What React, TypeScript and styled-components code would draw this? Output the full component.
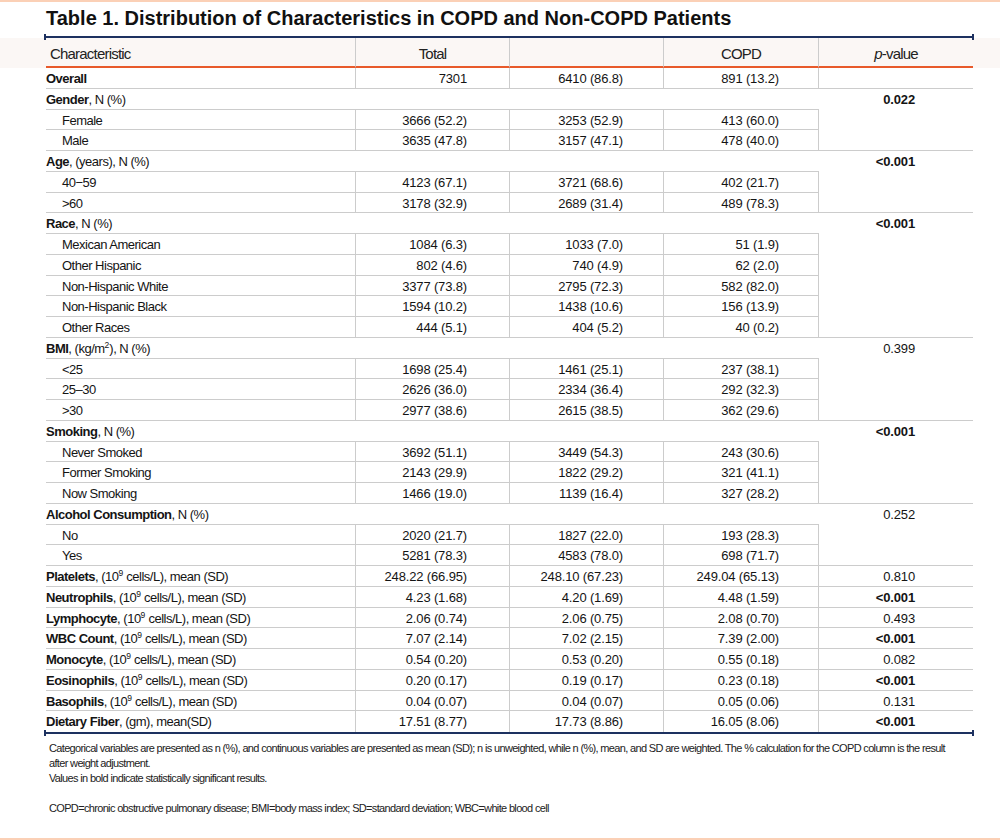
import React from "react";
import styled, { createGlobalStyle } from "styled-components";

const SANS = '"Liberation Sans", Arial, Helvetica, sans-serif';
const NAVY = "#1d3160";
const ORANGE = "#e85a2b";
const GRID = "#cccccc";
const INK = "#141414";

const Global = createGlobalStyle`
  html, body { margin: 0; padding: 0; background: #fff; }
  body { font-family: ${SANS}; color: ${INK}; }
  * { box-sizing: border-box; }
`;

const Page = styled.div`
  width: 1000px;
  height: 840px;
  border-top: 2px solid #fbd0b6;
  border-bottom: 2px solid #fbd0b6;
  display: flex;
  flex-direction: column;
`;

const Title = styled.h1`
  margin: 4px 0 0 0;
  padding-left: 46px;
  font-family: ${SANS};
  font-weight: 700;
  font-size: 20px;
  line-height: 24px;
  color: #111;
`;

const TableArea = styled.div`
  margin-top: 6px;
  background: linear-gradient(#fbf7f5, #fbf7f5) no-repeat 0 2px / 100% 30px;
`;

const Rule = styled.div`
  position: relative;
  margin-left: 44px;
  width: 930px;
  height: 2px;
  background: ${NAVY};
  &::before,
  &::after {
    content: "";
    position: absolute;
    top: -2px;
    width: 2px;
    height: 6px;
    background: ${NAVY};
  }
  &::before { left: 0; }
  &::after { right: 0; }
`;

const Grid = styled.div`
  margin-left: 46px;
  width: 927px;
  display: grid;
  grid-template-columns: 310px 154px 154px 155px 154px;
  grid-template-rows: 30px;
  grid-auto-rows: 20.75px;
`;

const HeadCell = styled.div<{ $align: "left" | "center"; $last?: boolean }>`
  display: flex;
  align-items: center;
  justify-content: ${(p) => (p.$align === "left" ? "flex-start" : "center")};
  padding-left: ${(p) => (p.$align === "left" ? "4px" : "0")};
  padding-top: 3px;
  font-size: 15px;
  letter-spacing: -0.8px;
  color: #222;
  border-bottom: 2px solid ${ORANGE};
  border-right: ${(p) => (p.$last ? "none" : `1px solid ${GRID}`)};
  i { font-style: italic; }
`;

const Cell = styled.div<{
  $kind: "label" | "value" | "p";
  $pad?: number;
  $indent?: boolean;
  $right?: boolean;
  $bottom?: boolean;
  $span?: number;
  $cols?: number;
  $bold?: boolean;
}>`
  display: flex;
  align-items: flex-start;
  justify-content: ${(p) => (p.$kind === "label" ? "flex-start" : "flex-end")};
  padding-left: ${(p) => (p.$kind === "label" ? (p.$indent ? "16px" : "0") : "0")};
  padding-right: ${(p) => (p.$pad ? `${p.$pad}px` : "0")};
  padding-top: 2px;
  grid-row: ${(p) => (p.$span ? `span ${p.$span}` : "auto")};
  grid-column: ${(p) => (p.$cols ? `span ${p.$cols}` : "auto")};
  font-size: 13px;
  letter-spacing: ${(p) => (p.$kind === "label" ? "-0.5px" : "-0.15px")};
  line-height: 17.75px;
  font-weight: ${(p) => (p.$bold ? 700 : 400)};
  white-space: nowrap;
  border-right: ${(p) => (p.$right ? `1px solid ${GRID}` : "none")};
  border-bottom: ${(p) => (p.$bottom ? `1px solid ${GRID}` : "none")};
  b { font-weight: 700; }
`;

const Sup = styled.sup`
  font-size: 8.5px;
  line-height: 0;
  vertical-align: 5px;
  letter-spacing: 0;
`;

const Notes = styled.div`
  margin-top: 7px;
  padding-left: 49px;
  font-size: 11px;
  letter-spacing: -0.66px;
  line-height: 15px;
  color: #222;
`;

const NoteLine = styled.div<{ $gap?: boolean }>`
  margin-top: ${(p) => (p.$gap ? "15px" : "0")};
  white-space: nowrap;
`;

const PAD = [42, 40, 39];
const P_PAD = 58;

type Group = {
  kind: "group";
  label: React.ReactNode;
  p: string;
  pBold: boolean;
  items: string[][];
};
type Cont = {
  kind: "cont";
  name: string;
  rest: React.ReactNode;
  values: string[];
  p: string;
  pBold: boolean;
};
type Overall = { kind: "overall"; values: string[] };
type Row = Group | Cont | Overall;

const unit = (
  <>
    , (10<Sup>9</Sup> cells/L), mean (SD)
  </>
);

const rows: Row[] = [
  { kind: "overall", values: ["7301", "6410 (86.8)", "891 (13.2)"] },
  {
    kind: "group",
    label: (
      <>
        <b>Gender</b>, N (%)
      </>
    ),
    p: "0.022",
    pBold: true,
    items: [
      ["Female", "3666 (52.2)", "3253 (52.9)", "413 (60.0)"],
      ["Male", "3635 (47.8)", "3157 (47.1)", "478 (40.0)"],
    ],
  },
  {
    kind: "group",
    label: (
      <>
        <b>Age</b>, (years), N (%)
      </>
    ),
    p: "<0.001",
    pBold: true,
    items: [
      ["40\u221259", "4123 (67.1)", "3721 (68.6)", "402 (21.7)"],
      [">60", "3178 (32.9)", "2689 (31.4)", "489 (78.3)"],
    ],
  },
  {
    kind: "group",
    label: (
      <>
        <b>Race</b>, N (%)
      </>
    ),
    p: "<0.001",
    pBold: true,
    items: [
      ["Mexican American", "1084 (6.3)", "1033 (7.0)", "51 (1.9)"],
      ["Other Hispanic", "802 (4.6)", "740 (4.9)", "62 (2.0)"],
      ["Non-Hispanic White", "3377 (73.8)", "2795 (72.3)", "582 (82.0)"],
      ["Non-Hispanic Black", "1594 (10.2)", "1438 (10.6)", "156 (13.9)"],
      ["Other Races", "444 (5.1)", "404 (5.2)", "40 (0.2)"],
    ],
  },
  {
    kind: "group",
    label: (
      <>
        <b>BMI</b>, (kg/m<Sup>2</Sup>), N (%)
      </>
    ),
    p: "0.399",
    pBold: false,
    items: [
      ["<25", "1698 (25.4)", "1461 (25.1)", "237 (38.1)"],
      ["25\u201330", "2626 (36.0)", "2334 (36.4)", "292 (32.3)"],
      [">30", "2977 (38.6)", "2615 (38.5)", "362 (29.6)"],
    ],
  },
  {
    kind: "group",
    label: (
      <>
        <b>Smoking</b>, N (%)
      </>
    ),
    p: "<0.001",
    pBold: true,
    items: [
      ["Never Smoked", "3692 (51.1)", "3449 (54.3)", "243 (30.6)"],
      ["Former Smoking", "2143 (29.9)", "1822 (29.2)", "321 (41.1)"],
      ["Now Smoking", "1466 (19.0)", "1139 (16.4)", "327 (28.2)"],
    ],
  },
  {
    kind: "group",
    label: (
      <>
        <b>Alcohol Consumption</b>, N (%)
      </>
    ),
    p: "0.252",
    pBold: false,
    items: [
      ["No", "2020 (21.7)", "1827 (22.0)", "193 (28.3)"],
      ["Yes", "5281 (78.3)", "4583 (78.0)", "698 (71.7)"],
    ],
  },
  { kind: "cont", name: "Platelets", rest: unit, values: ["248.22 (66.95)", "248.10 (67.23)", "249.04 (65.13)"], p: "0.810", pBold: false },
  { kind: "cont", name: "Neutrophils", rest: unit, values: ["4.23 (1.68)", "4.20 (1.69)", "4.48 (1.59)"], p: "<0.001", pBold: true },
  { kind: "cont", name: "Lymphocyte", rest: unit, values: ["2.06 (0.74)", "2.06 (0.75)", "2.08 (0.70)"], p: "0.493", pBold: false },
  { kind: "cont", name: "WBC Count", rest: unit, values: ["7.07 (2.14)", "7.02 (2.15)", "7.39 (2.00)"], p: "<0.001", pBold: true },
  { kind: "cont", name: "Monocyte", rest: unit, values: ["0.54 (0.20)", "0.53 (0.20)", "0.55 (0.18)"], p: "0.082", pBold: false },
  { kind: "cont", name: "Eosinophils", rest: unit, values: ["0.20 (0.17)", "0.19 (0.17)", "0.23 (0.18)"], p: "<0.001", pBold: true },
  { kind: "cont", name: "Basophils", rest: unit, values: ["0.04 (0.07)", "0.04 (0.07)", "0.05 (0.06)"], p: "0.131", pBold: false },
  { kind: "cont", name: "Dietary Fiber", rest: ", (gm), mean(SD)", values: ["17.51 (8.77)", "17.73 (8.86)", "16.05 (8.06)"], p: "<0.001", pBold: true },
];

function renderRow(row: Row, idx: number, isLast: boolean) {
  const bottom = !isLast;
  if (row.kind === "overall") {
    return (
      <React.Fragment key={idx}>
        <Cell $kind="label" $right $bottom={bottom} $bold>
          Overall
        </Cell>
        {row.values.map((v, i) => (
          <Cell key={i} $kind="value" $pad={PAD[i]} $right $bottom={bottom}>
            {v}
          </Cell>
        ))}
        <Cell $kind="p" $pad={P_PAD} $bottom={bottom} />
      </React.Fragment>
    );
  }
  if (row.kind === "cont") {
    return (
      <React.Fragment key={idx}>
        <Cell $kind="label" $right $bottom={bottom}>
          <span>
            <b>{row.name}</b>
            {row.rest}
          </span>
        </Cell>
        {row.values.map((v, i) => (
          <Cell key={i} $kind="value" $pad={PAD[i]} $right $bottom={bottom}>
            {v}
          </Cell>
        ))}
        <Cell $kind="p" $pad={P_PAD} $bottom={bottom} $bold={row.pBold}>
          {row.p}
        </Cell>
      </React.Fragment>
    );
  }
  return (
    <React.Fragment key={idx}>
      <Cell $kind="label" $cols={4} $bottom>
        <span>{row.label}</span>
      </Cell>
      <Cell $kind="p" $pad={P_PAD} $span={row.items.length + 1} $bottom $bold={row.pBold}>
        {row.p}
      </Cell>
      {row.items.map((it, j) => (
        <React.Fragment key={j}>
          <Cell $kind="label" $indent $right $bottom>
            {it[0]}
          </Cell>
          {it.slice(1).map((v, i) => (
            <Cell key={i} $kind="value" $pad={PAD[i]} $right $bottom>
              {v}
            </Cell>
          ))}
        </React.Fragment>
      ))}
    </React.Fragment>
  );
}

export default function App() {
  return (
    <>
      <Global />
      <Page>
        <Title>Table 1. Distribution of Characteristics in COPD and Non-COPD Patients</Title>
        <TableArea>
          <Rule />
          <Grid>
            <HeadCell $align="left">Characteristic</HeadCell>
            <HeadCell $align="center">Total</HeadCell>
            <HeadCell $align="center"></HeadCell>
            <HeadCell $align="center">COPD</HeadCell>
            <HeadCell $align="center" $last>
              <span>
                <i>p</i>-value
              </span>
            </HeadCell>
            {rows.map((r, i) => renderRow(r, i, i === rows.length - 1))}
          </Grid>
          <Rule />
        </TableArea>
        <Notes>
          <NoteLine>
            Categorical variables are presented as n (%), and continuous variables are presented as mean (SD); n is
            unweighted, while n (%), mean, and SD are weighted. The % calculation for the COPD column is the result
          </NoteLine>
          <NoteLine>after weight adjustment.</NoteLine>
          <NoteLine>Values in bold indicate statistically significant results.</NoteLine>
          <NoteLine $gap>
            COPD=chronic obstructive pulmonary disease; BMI=body mass index; SD=standard deviation; WBC=white blood cell
          </NoteLine>
        </Notes>
      </Page>
    </>
  );
}
